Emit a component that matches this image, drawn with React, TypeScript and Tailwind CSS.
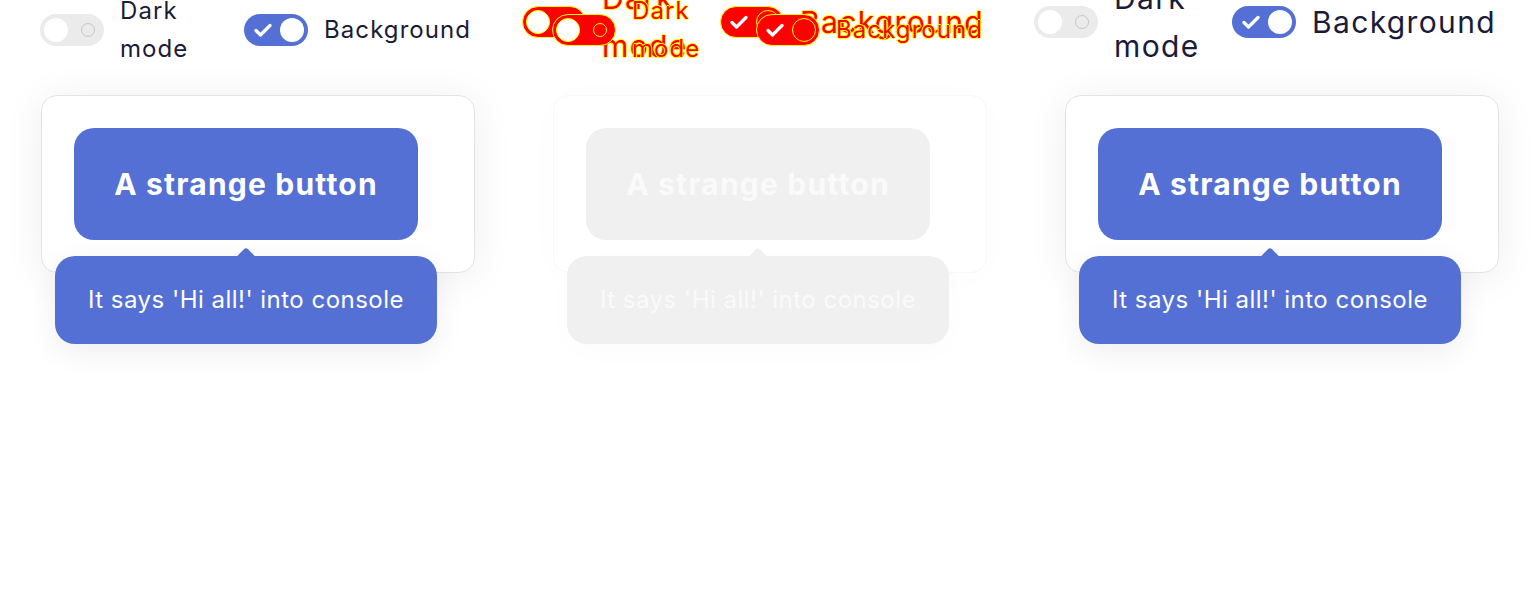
import React from 'react';

type Variant = 'normal' | 'diff';

const Check = ({ className = '' }: { className?: string }) => (
  <svg width="20" height="14" viewBox="0 0 20 14" fill="none" className={className}>
    <path d="M3 7.5l4.5 4.5L17 2.5" stroke="currentColor" strokeWidth="3.2" strokeLinecap="round" strokeLinejoin="round" />
  </svg>
);

const OffToggle = ({ variant }: { variant: Variant }) =>
  variant === 'diff' ? (
    <div className="w-[64px] h-[32px] shrink-0 rounded-full bg-[#ff0000] border border-[#ffff00] flex items-center justify-between px-[3px]">
      <span className="w-[24px] h-[24px] rounded-full bg-white border border-[#ffff00]" />
      <span className="w-[14px] h-[14px] rounded-full border-[1.5px] border-[#ffff00] mr-[5px]" />
    </div>
  ) : (
    <div className="w-[64px] h-[32px] shrink-0 rounded-full bg-[#ebebeb] flex items-center justify-between px-[4px]">
      <span className="w-[24px] h-[24px] rounded-full bg-white" />
      <span className="w-[14px] h-[14px] rounded-full border-[1.5px] border-[#c6c6c6] mr-[5px]" />
    </div>
  );

const OnToggle = ({ variant }: { variant: Variant }) =>
  variant === 'diff' ? (
    <div className="w-[64px] h-[32px] shrink-0 rounded-full bg-[#ff0000] border border-[#ffff00] flex items-center justify-between px-[3px]">
      <Check className="ml-[5px] text-white" />
      <span className="w-[24px] h-[24px] rounded-full border-[1.5px] border-[#ffff00]" />
    </div>
  ) : (
    <div className="w-[64px] h-[32px] shrink-0 rounded-full bg-[#5470d4] flex items-center justify-between px-[4px]">
      <Check className="ml-[5px] text-white" />
      <span className="w-[24px] h-[24px] rounded-full bg-white" />
    </div>
  );

const diffText =
  'text-[#ff0000] [text-shadow:1px_0_#ffff00,-1px_0_#ffff00,0_1px_#ffff00,0_-1px_#ffff00]';

const ToggleRow = ({
  variant,
  big,
  className = '',
}: {
  variant: Variant;
  big?: boolean;
  className?: string;
}) => {
  const txt = big ? 'text-[30px]' : 'text-[24px]';
  const color = variant === 'diff' ? diffText : 'text-[#1a1b38]';
  return (
    <div className={`flex items-center gap-[40px] leading-[1.6] tracking-[0.045em] ${txt} ${color} ${className}`}>
      <div className="flex items-center gap-[16px]">
        <OffToggle variant={variant} />
        <span className={big ? 'w-[78px]' : 'w-[84px]'}>Dark mode</span>
      </div>
      <div className="flex items-center gap-[16px]">
        <OnToggle variant={variant} />
        <span className="whitespace-nowrap">Background</span>
      </div>
    </div>
  );
};

const Card = ({ faded }: { faded?: boolean }) => (
  <div
    className={`w-[434px] h-[178px] ml-px rounded-[16px] border bg-white p-[32px] ${
      faded
        ? 'border-[#f8f8f8] shadow-[0_4px_40px_rgba(0,0,0,0.015)]'
        : 'border-[#e4e4e4] shadow-[0_4px_40px_rgba(0,0,0,0.07)]'
    }`}
  >
    <div className="relative w-fit">
      <button
        className={`w-[344px] h-[112px] rounded-[20px] text-[30px] font-bold tracking-[0.04em] flex items-center justify-center ${
          faded ? 'bg-[#f0f0f0] text-[#fafafa]' : 'bg-[#5470d4] text-white'
        }`}
      >
        A strange button
      </button>
      <div
        className={`absolute left-1/2 -translate-x-1/2 top-[calc(100%+16px)] w-[382px] h-[88px] rounded-[20px] flex items-center justify-center text-[24px] tracking-[0.02em] whitespace-nowrap ${
          faded
            ? 'bg-[#f0f0f0] text-[#fafafa] shadow-[0_8px_30px_rgba(0,0,0,0.015)]'
            : 'bg-[#5470d4] text-white shadow-[0_8px_30px_rgba(0,0,0,0.07)]'
        }`}
      >
        <span
          className={`absolute left-1/2 -top-[6px] -translate-x-1/2 w-[14px] h-[14px] rotate-45 rounded-[3px] ${
            faded ? 'bg-[#f0f0f0]' : 'bg-[#5470d4]'
          }`}
        />
        <span className="relative">It says 'Hi all!' into console</span>
      </div>
    </div>
  </div>
);

export default function App() {
  return (
    <div className="w-[1536px] h-[600px] bg-white overflow-hidden flex font-['Inter',sans-serif]">
      {/* expected */}
      <div className="w-[512px] pl-[40px] flex flex-col">
        <ToggleRow variant="normal" className="h-[60px]" />
        <div className="mt-[35px]">
          <Card />
        </div>
      </div>

      {/* diff */}
      <div className="w-[512px] pl-[40px] flex flex-col">
        <div className="relative h-[60px]">
          <ToggleRow variant="diff" big className="absolute top-0 -left-[30px] h-[44px]" />
          <ToggleRow variant="diff" className="absolute top-0 left-0 h-[60px]" />
        </div>
        <div className="mt-[35px]">
          <Card faded />
        </div>
      </div>

      {/* actual */}
      <div className="w-[512px] pl-[40px] flex flex-col">
        <ToggleRow variant="normal" big className="h-[44px] mb-[16px] -ml-[30px]" />
        <div className="mt-[35px]">
          <Card />
        </div>
      </div>
    </div>
  );
}
